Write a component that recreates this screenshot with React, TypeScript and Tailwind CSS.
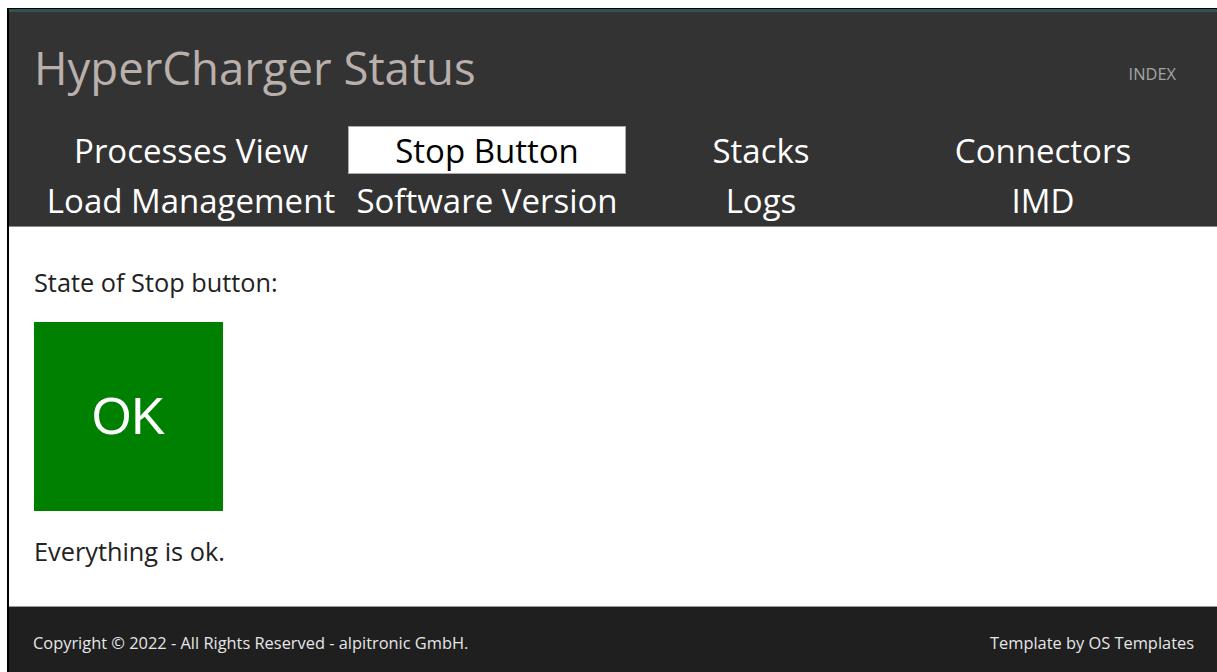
import React from 'react';

type NavItem = { label: string; active?: boolean };

const navItems: NavItem[] = [
  { label: 'Processes View' },
  { label: 'Stop Button', active: true },
  { label: 'Stacks' },
  { label: 'Connectors' },
  { label: 'Load Management' },
  { label: 'Software Version' },
  { label: 'Logs' },
  { label: 'IMD' },
];

const StatusTile: React.FC<{ ok: boolean }> = ({ ok }) => (
  <div
    className={`w-[189px] h-[189px] flex items-center justify-center ${ok ? 'bg-[#008000]' : 'bg-[#c00000]'}`}
  >
    <span className="text-white text-[51px] leading-none font-['Liberation_Sans',Arial,sans-serif]">
      {ok ? 'OK' : 'STOP'}
    </span>
  </div>
);

const App: React.FC = () => {
  const stopOk = true;

  return (
    <div className="min-h-screen bg-white pt-[8px] pl-[7px] font-['Open_Sans','Noto_Sans',sans-serif]">
      <div className="border-t border-l-2 border-black">
        {/* Header */}
        <header className="bg-[#333333] border-t-[3px] border-[#2e5454] border-b border-b-[#8a8a8a] pt-[25px] px-[25px]">
          <div className="flex justify-between items-start">
            <h1 className="text-[45.5px] leading-[61px] text-[#b9b0ad]">HyperCharger Status</h1>
            <a className="pt-[27px] pr-[16px] text-[16.4px] leading-[20px] text-[#a3a3a3] uppercase">Index</a>
          </div>

          <nav className="mt-[26px] grid grid-cols-[310px_278px_266px_294px] gap-[2px] p-[2px]">
            {navItems.map((item) => (
              <a
                key={item.label}
                className={`h-[48px] flex items-center justify-center pt-[2px] text-[33px] leading-[46px] whitespace-nowrap ${
                  item.active ? 'bg-white text-black border border-[#aaaaaa]' : 'text-white'
                }`}
              >
                {item.label}
              </a>
            ))}
          </nav>
        </header>

        {/* Content */}
        <main className="pt-[37px] pb-[37px] px-[25px] text-[25.3px] leading-[36px] text-[#222222]">
          <p>State of Stop button:</p>
          <div className="mt-[22px] mb-[22px]">
            <StatusTile ok={stopOk} />
          </div>
          <p>{stopOk ? 'Everything is ok.' : 'Stop button pressed!'}</p>
        </main>

        {/* Footer */}
        <footer className="bg-[#1f1f1f] border-t border-[#9a9a9a] pt-[26px] pb-[30px] pl-[24px] pr-[23px] flex justify-between text-[16.4px] leading-[20px] text-[#e6e6e6]">
          <p>Copyright © 2022 - All Rights Reserved - alpitronic GmbH.</p>
          <p>Template by OS Templates</p>
        </footer>
      </div>
    </div>
  );
};

export default App;
